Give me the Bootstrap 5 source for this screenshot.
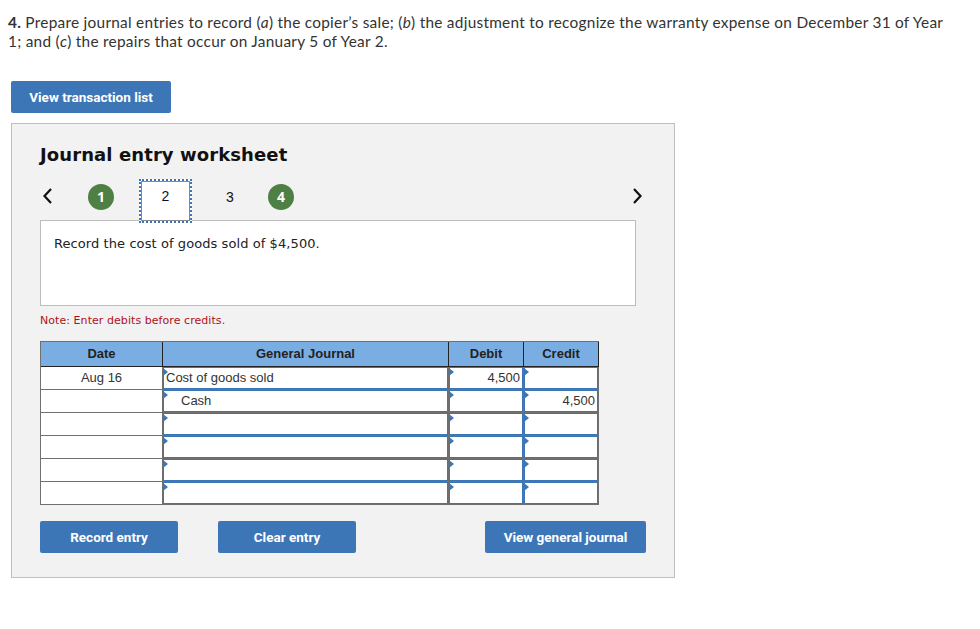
<!DOCTYPE html>
<html lang="en">
<head>
<meta charset="utf-8">
<title>Journal entry worksheet</title>
<link rel="stylesheet" href="https://cdn.jsdelivr.net/npm/bootstrap@5.3.0/dist/css/bootstrap.min.css">
<style>
body{background:#fff;color:#333;margin:0;padding:0 8px;font-family:"Lato","Liberation Sans",sans-serif}
.qtext{font-size:15.4px;line-height:19px;padding-top:13px;margin:0 0 30px;color:#333;letter-spacing:.265px;width:942px}
.qtext b{color:#333}
.qbtn{background:#3d76b6;border:0;border-radius:2px;color:#fff;font:700 13.5px/32px Roboto,"Liberation Sans",sans-serif;height:32px;padding:0;display:block}
.qbtn:hover{background:#3d76b6;color:#fff}
.btn-list{width:160px;margin-left:3px;margin-bottom:10px}
.wk{margin-left:3px;width:664px;height:455px;background:#f2f2f2;border:1px solid #c0c0c0;padding:21px 28px 0}
.wk h2{font:700 18px/20px "DejaVu Sans",sans-serif;color:#111;margin:0 0 14px;letter-spacing:.1px}
.steps{height:43px;margin-bottom:-2px;position:relative;z-index:1}
.chev{width:12px;height:16px;flex:none;margin-top:9px}
.stepnum{font:400 14px/1 "Liberation Sans",sans-serif;color:#111}
.dot{width:26px;height:26px;border-radius:50%;background:#4e8045;color:#fff;font:700 14px/26px "Open Sans","Liberation Sans",sans-serif;text-align:center;flex:none;margin-top:5px}
.tab-on{width:53px;height:44px;background:#fff;border:2px dotted #3d76b6;outline:1px solid #888;outline-offset:-3px;text-align:center;line-height:30px;flex:none;margin-left:25px}
.tab-off{width:20px;text-align:center;flex:none;line-height:36px;margin-left:28px}
.dot-a{margin-left:36px}
.dot-b{margin-left:28px}
.chev-r{margin-left:auto;margin-right:3px}
.prompt{width:596px;height:86px;background:#fff;border:1px solid #bdbdbd;padding:14px 13px;font:400 13px/18px "DejaVu Sans",sans-serif;color:#222;letter-spacing:.08px}
.note{font:400 11px/14px "DejaVu Sans",sans-serif;color:#b01116;margin:8px 0 13px;letter-spacing:.06px}
.jt{table-layout:fixed;border-collapse:separate;border-spacing:0;width:559px;font:400 13px/1 "Liberation Sans",sans-serif;color:#333;border-top:1px solid #6f6f6f;border-left:1px solid #6f6f6f}
.jt th{background:#7aaee2;height:25px;padding:0 0 2px;text-align:center;font-weight:700;color:#222;border-right:1px solid #222;border-bottom:1px solid #222}
.jt td{background:#fff;height:23px;padding:0;border-right:1px solid #6f6f6f;border-bottom:1px solid #6f6f6f;vertical-align:top}
.jt td.dc{text-align:center;line-height:21px}
.ce{position:relative;height:22px;background:#fff;border:1px solid #3d76b6;line-height:19px;padding:0 2px;white-space:nowrap}
.ce::before{content:"";position:absolute;left:-1px;top:0;border-left:5px solid #3d76b6;border-top:4px solid transparent;border-bottom:4px solid transparent}
.ce.ind{padding-left:17px}
.ce.num{text-align:right}
.actions{margin-top:16px;width:606px}
.b1{width:138px}
.b2{width:138px;margin-left:40px}
.b3{width:161px;margin-left:auto}
</style>
</head>
<body>
<p class="qtext"><b>4.</b> Prepare journal entries to record (<i>a</i>) the copier’s sale; (<i>b</i>) the adjustment to recognize the warranty expense on December 31 of Year 1; and (<i>c</i>) the repairs that occur on January 5 of Year 2.</p>
<button class="btn qbtn btn-list" type="button">View transaction list</button>
<div class="wk">
  <h2>Journal entry worksheet</h2>
  <div class="steps d-flex align-items-start">
    <svg class="chev" viewBox="0 0 12 16" aria-hidden="true"><path d="M11 1 4.500 8 11 15" fill="none" stroke="#111" stroke-width="2.2"/></svg>
    <span class="dot dot-a">1</span>
    <span class="stepnum tab-on">2</span>
    <span class="stepnum tab-off">3</span>
    <span class="dot dot-b">4</span>
    <svg class="chev chev-r" viewBox="0 0 12 16" aria-hidden="true"><path d="M3 1 9.500 8 3 15" fill="none" stroke="#111" stroke-width="2.200"/></svg>
  </div>
  <div class="prompt">Record the cost of goods sold of $4,500.</div>
  <div class="note">Note: Enter debits before credits.</div>
  <table class="jt">
    <colgroup><col style="width:122px"><col style="width:286px"><col style="width:75px"><col style="width:75px"></colgroup>
    <thead><tr><th>Date</th><th>General Journal</th><th>Debit</th><th>Credit</th></tr></thead>
    <tbody>
      <tr><td class="dc">Aug 16</td><td><div class="ce">Cost of goods sold</div></td><td><div class="ce num">4,500</div></td><td><div class="ce num"></div></td></tr>
      <tr><td class="dc"></td><td><div class="ce ind">Cash</div></td><td><div class="ce num"></div></td><td><div class="ce num">4,500</div></td></tr>
      <tr><td class="dc"></td><td><div class="ce"></div></td><td><div class="ce num"></div></td><td><div class="ce num"></div></td></tr>
      <tr><td class="dc"></td><td><div class="ce"></div></td><td><div class="ce num"></div></td><td><div class="ce num"></div></td></tr>
      <tr><td class="dc"></td><td><div class="ce"></div></td><td><div class="ce num"></div></td><td><div class="ce num"></div></td></tr>
      <tr><td class="dc"></td><td><div class="ce"></div></td><td><div class="ce num"></div></td><td><div class="ce num"></div></td></tr>
    </tbody>
  </table>
  <div class="actions d-flex">
    <button class="btn qbtn b1" type="button">Record entry</button>
    <button class="btn qbtn b2" type="button">Clear entry</button>
    <button class="btn qbtn b3" type="button">View general journal</button>
  </div>
</div>
<script src="https://cdn.jsdelivr.net/npm/bootstrap@5.3.0/dist/js/bootstrap.bundle.min.js"></script>
</body>
</html>
